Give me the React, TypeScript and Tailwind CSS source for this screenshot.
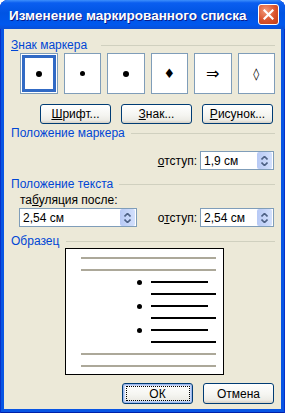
import React from "react";

// Windows XP "Изменение маркированного списка" dialog (Word bullet settings).

function Header({ label, accel, rest, gap = "ml-[6px]" }: { label?: string; accel: string; rest: string; gap?: string }) {
  return (
    <div className="flex h-[14px] items-center">
      <span className="whitespace-nowrap text-[#0046D5]">
        {label}
        <u className="underline-offset-[1px]">{accel}</u>
        {rest}
      </span>
      <div className={`h-px flex-1 bg-[#D0D0BF] ${gap}`} />
    </div>
  );
}

function XpButton({ accel, rest, def = false, pre = "" }: { accel?: string; rest: string; def?: boolean; pre?: string }) {
  return (
    <div
      className={`flex h-full w-[71px] items-center justify-center rounded-[3px] border border-[#003C74] bg-[linear-gradient(180deg,#ffffff_0%,#f5f5f1_55%,#ecebe5_85%,#d6d0c5_100%)] text-black ${
        def ? "shadow-[inset_0_0_0_1px_#9db7ec,inset_0_0_0_2px_#c5d6f7]" : ""
      }`}
    >
      {def ? (
        <span className="flex h-[15px] w-[64px] items-center justify-center border border-dotted border-black">{rest}</span>
      ) : (
        <span>
          {pre}
          {accel && <u className="underline-offset-[1px]">{accel}</u>}
          {rest}
        </span>
      )}
    </div>
  );
}

function Spin({ value, w }: { value: string; w: string }) {
  return (
    <div className={`flex h-[19px] items-center border border-[#7F9DB9] bg-white pl-[3px] pr-px ${w}`}>
      <span className="flex-1">{value}</span>
      <div className="flex h-[17px] w-[15px] flex-col items-center justify-center gap-[2px] rounded-[2px] bg-[linear-gradient(90deg,#b7c9f5,#d3e0fc)]">
        <svg width="7" height="4" viewBox="0 0 7 4">
          <path d="M0.5 3.5 L3.5 0.5 L6.5 3.5" fill="none" stroke="#4D6185" strokeWidth="1.6" />
        </svg>
        <svg width="7" height="4" viewBox="0 0 7 4">
          <path d="M0.5 0.5 L3.5 3.5 L6.5 0.5" fill="none" stroke="#4D6185" strokeWidth="1.6" />
        </svg>
      </div>
    </div>
  );
}

function BulletBox({ children, selected = false }: { children: React.ReactNode; selected?: boolean }) {
  return (
    <div className="h-[41px] border border-[#7F9DB9] bg-white p-px">
      <div
        className={`flex h-full w-full items-center justify-center ${selected ? "border-[3px] border-[#316AC5]" : ""}`}
      >
        {children}
      </div>
    </div>
  );
}

const rows: ("gray" | "short" | "long")[] = [
  "gray",
  "gray",
  "short",
  "long",
  "short",
  "long",
  "short",
  "long",
  "gray",
  "gray",
];

export default function App() {
  return (
    <div className="h-[413px] w-[285px] bg-white font-['Liberation_Sans',Arial,sans-serif] text-[12px] leading-[14px] text-black">
      <div className="flex h-full flex-col rounded-t-[8px] bg-[#0855E4] shadow-[inset_1px_0_#0731c9,inset_-1px_0_#0731c9,inset_0_-1px_#0020a8]">
        {/* title bar */}
        <div className="flex h-[29px] items-center rounded-t-[8px] bg-[linear-gradient(180deg,#3d8ffb_0%,#0a5ef0_10%,#0054e3_45%,#0058ee_85%,#0a4fd6_100%)] pl-[9px] pr-[6px]">
          <span className="flex-1 pt-[2px] text-[13.5px] font-bold text-white [text-shadow:1px_1px_#0a1c8c]">
            Изменение маркированного списка
          </span>
          <div className="flex h-[21px] w-[21px] items-center justify-center rounded-[3px] border border-white bg-[radial-gradient(circle_at_35%_30%,#f29a7a,#d9522c_55%,#c03d18)]">
            <svg width="11" height="11" viewBox="0 0 11 11">
              <path d="M1.5 1.5 L9.5 9.5 M9.5 1.5 L1.5 9.5" stroke="white" strokeWidth="2.2" strokeLinecap="square" />
            </svg>
          </div>
        </div>

        {/* body */}
        <div className="mx-[4px] mb-[4px] flex flex-1 flex-col bg-[#ECE9D8] pl-[7px] pr-[6px]">
          <div className="mt-[9px]">
            <Header accel="З" rest="нак маркера" gap="ml-[14px]" />
          </div>

          <div className="ml-[9px] mt-px grid grid-cols-6 gap-x-[6px]">
            <BulletBox selected>
              <div className="h-[6px] w-[6px] rounded-full bg-black" />
            </BulletBox>
            <BulletBox>
              <div className="h-[5px] w-[5px] rounded-full bg-black" />
            </BulletBox>
            <BulletBox>
              <div className="h-[6px] w-[6px] rounded-full bg-black" />
            </BulletBox>
            <BulletBox>
              <span className="font-['DejaVu_Sans',sans-serif] text-[13px] leading-none">♦</span>
            </BulletBox>
            <BulletBox>
              <span className="font-['DejaVu_Sans',sans-serif] text-[16px] leading-none">⇒</span>
            </BulletBox>
            <BulletBox>
              <span className="font-['DejaVu_Sans',sans-serif] text-[12px] leading-none">◊</span>
            </BulletBox>
          </div>

          <div className="ml-[29px] mt-[10px] flex h-[20px] gap-x-[10px]">
            <XpButton accel="Ш" rest="рифт..." />
            <XpButton accel="З" rest="нак..." />
            <XpButton accel="Р" rest="исунок..." />
          </div>

          <div className="mt-[2px]">
            <Header label="Положение маркера" accel="" rest="" />
          </div>

          <div className="mt-[11px] flex items-center justify-end pr-px">
            <span className="mr-[3px]">
              <u className="underline-offset-[1px]">о</u>тступ:
            </span>
            <Spin value="1,9 см" w="w-[74px]" />
          </div>

          <div className="mt-[7px]">
            <Header label="Положение текста" accel="" rest="" />
          </div>

          <div className="ml-[9px] mt-[2px] h-[14px]">
            та<u className="underline-offset-[1px]">б</u>уляция после:
          </div>

          <div className="ml-[8px] mt-px flex items-center pr-px">
            <Spin value="2,54 см" w="w-[118px]" />
            <span className="ml-auto mr-[3px]">
              о<u className="underline-offset-[1px]">т</u>ступ:
            </span>
            <Spin value="2,54 см" w="w-[74px]" />
          </div>

          <div className="mt-[7px]">
            <Header label="Образец" accel="" rest="" gap="ml-[7px]" />
          </div>

          {/* preview */}
          <div className="ml-[54px] flex h-[127px] w-[159px] flex-col border border-black bg-white pb-[2px] pt-[3px]">
            {rows.map((r, i) => (
              <div key={i} className="relative flex h-[12px] items-center">
                {r === "gray" && <div className="ml-[15px] h-[2px] w-[135px] bg-[#ACA899]" />}
                {r === "short" && (
                  <>
                    <div className="ml-[71px] h-[5px] w-[5px] rounded-full bg-black" />
                    <div className="ml-[9px] h-[2px] w-[57px] bg-black" />
                  </>
                )}
                {r === "long" && <div className="ml-[85px] h-[2px] w-[65px] bg-black" />}
              </div>
            ))}
          </div>

          <div className="ml-[111px] mt-[8px] flex h-[21px] gap-x-[10px]">
            <XpButton rest="ОК" def />
            <XpButton rest="Отмена" />
          </div>
        </div>
      </div>
    </div>
  );
}
